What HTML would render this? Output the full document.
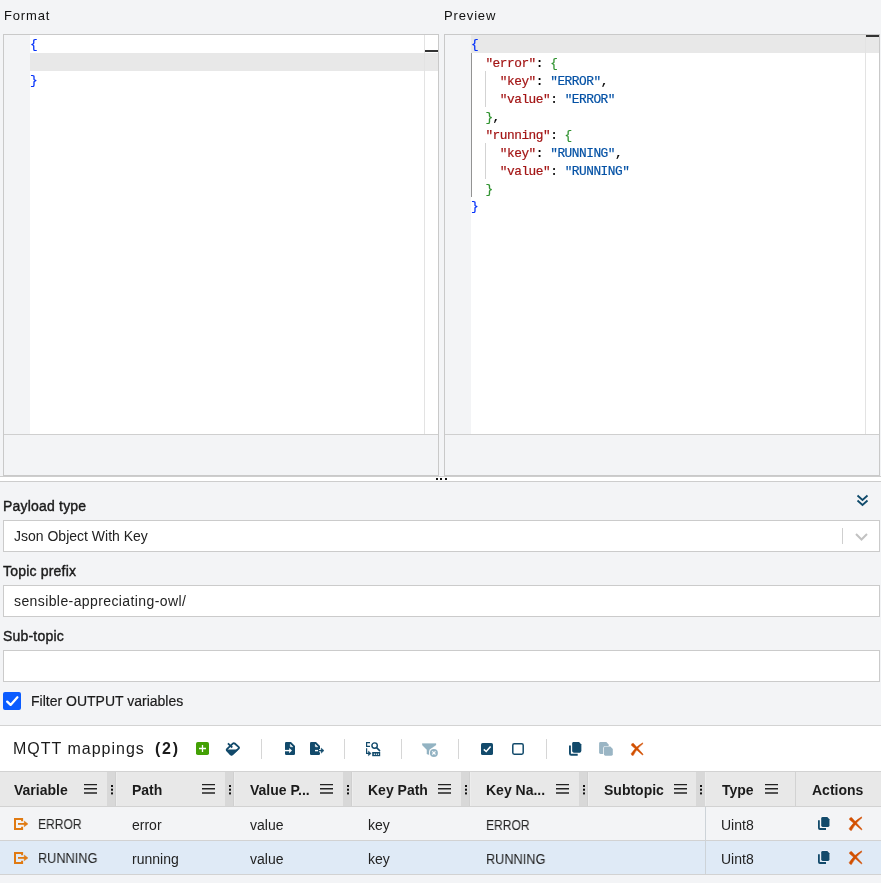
<!DOCTYPE html>
<html><head><meta charset="utf-8">
<style>
*{box-sizing:border-box;margin:0;padding:0}
html,body{width:881px;height:883px;overflow:hidden}
body{position:relative;background:#f3f4f6;font-family:"Liberation Sans",sans-serif;color:#1f1f1f}
.abs{position:absolute}
div{will-change:transform}
.lbl{position:absolute;font-size:13px;letter-spacing:0.85px;line-height:16px;color:#111;white-space:nowrap}
.ed{position:absolute;top:34px;width:436px;height:442px;border:1px solid #c9c9c9;background:#f3f4f6}
.ed .gut{position:absolute;left:0;top:0;width:26px;height:399px;background:#f3f4f6}
.ed .cnt{position:absolute;left:26px;top:0;width:394px;height:399px;background:#fff;overflow:hidden}
.ed .ruler{position:absolute;left:420px;top:0;width:14px;height:399px;background:#fff;border-left:1px solid #e3e3e3}
.ed .hbar{position:absolute;left:0;top:399px;width:434px;height:1px;background:#cfcfcf}
.code{position:absolute;left:0;margin-top:2px;font-family:"Liberation Mono",monospace;font-size:12.8px;letter-spacing:-0.48px;line-height:18px;white-space:pre;height:18px;-webkit-text-stroke-width:0.2px}
.cur{position:absolute;left:0;width:100%;height:18px;background:#e8e8e8}
.b1{color:#0431fa}.b2{color:#319331}.k{color:#a31515}.v{color:#0451a5}.p{color:#000}
.guide{position:absolute;width:1px;background:#d3d3d3}
.form-lbl{position:absolute;left:3px;font-size:14px;line-height:16px;color:#1b1b1b;white-space:nowrap;letter-spacing:0.2px;-webkit-text-stroke:0.4px #1b1b1b}
.inp{position:absolute;left:3px;width:877px;height:32px;background:#fff;border:1px solid #cbcbcb;font-size:14px;line-height:30px;padding-left:10px;color:#222;white-space:nowrap}
.sep{position:absolute;top:739px;width:1px;height:20px;background:#d6d6d6}
.hdr{position:absolute;top:771px;left:0;width:881px;height:36px;background:#e8e8e8;border-top:1px solid #d2d2d2;border-bottom:1px solid #d2d2d2}
.hc{position:absolute;top:10px;font-size:14px;font-weight:bold;line-height:16px;color:#1b1b1b;white-space:nowrap}
.handle{position:absolute;top:0;width:9px;height:34px;background:#d8d8d8;border-right:1px solid #d0d0d0}
.row{position:absolute;left:0;width:881px;height:34px;border-bottom:1px solid #d2d2d2}
.cell{position:absolute;top:9px;font-size:14px;line-height:16px;color:#222;white-space:nowrap}
</style></head><body>

<div class="lbl" style="left:4px;top:8px">Format</div>
<div class="lbl" style="left:444px;top:8px">Preview</div>

<!-- Format editor -->
<div class="ed" style="left:3px">
  <div class="gut"></div>
  <div class="cnt">
    <div class="cur" style="top:18px"></div>
    <div class="code b1" style="top:-1px;left:0">{</div>
    <div class="code b1" style="top:35px;left:0">}</div>
  </div>
  <div class="ruler"><div class="cur" style="top:18px"></div><div class="abs" style="left:0;top:15px;width:13px;height:2px;background:#333"></div></div>
  <div class="hbar"></div>
</div>

<!-- Preview editor -->
<div class="ed" style="left:444px">
  <div class="gut"></div>
  <div class="cnt">
    <div class="cur" style="top:0"></div>
    <div class="guide" style="left:0;top:18px;height:144px;background:#939393"></div>
    <div class="guide" style="left:14px;top:36px;height:36px"></div>
    <div class="guide" style="left:14px;top:108px;height:36px"></div>
    <div class="code" style="top:-1px;left:0"><span class="b1">{</span></div>
    <div class="code" style="top:18px;left:0">  <span class="k">"error"</span><span class="p">: </span><span class="b2">{</span></div>
    <div class="code" style="top:36px;left:0">    <span class="k">"key"</span><span class="p">: </span><span class="v">"ERROR"</span><span class="p">,</span></div>
    <div class="code" style="top:54px;left:0">    <span class="k">"value"</span><span class="p">: </span><span class="v">"ERROR"</span></div>
    <div class="code" style="top:72px;left:0">  <span class="b2">}</span><span class="p">,</span></div>
    <div class="code" style="top:90px;left:0">  <span class="k">"running"</span><span class="p">: </span><span class="b2">{</span></div>
    <div class="code" style="top:108px;left:0">    <span class="k">"key"</span><span class="p">: </span><span class="v">"RUNNING"</span><span class="p">,</span></div>
    <div class="code" style="top:126px;left:0">    <span class="k">"value"</span><span class="p">: </span><span class="v">"RUNNING"</span></div>
    <div class="code" style="top:144px;left:0">  <span class="b2">}</span></div>
    <div class="code" style="top:161px;left:0"><span class="b1">}</span></div>
  </div>
  <div class="ruler"><div class="cur" style="top:0"></div><div class="abs" style="left:0;top:0;width:13px;height:2px;background:#333"></div></div>
  <div class="hbar"></div>
</div>

<!-- splitter -->
<div class="abs" style="left:0;top:476px;width:881px;height:6px;background:#fff;border-top:1px solid #cdcdcd;border-bottom:1px solid #cdcdcd"></div>
<div class="abs" style="left:436px;top:478px;width:2px;height:2px;background:#111"></div>
<div class="abs" style="left:440px;top:478px;width:2px;height:2px;background:#111"></div>
<div class="abs" style="left:445px;top:478px;width:2px;height:2px;background:#111"></div>


<!-- form -->
<div class="form-lbl" style="top:498px">Payload type</div>
<svg class="abs" style="left:856px;top:494px" width="13" height="13" viewBox="0 0 13 13"><path d="M1.5 1.5 L6.5 6 L11.5 1.5 M1.5 6.5 L6.5 11 L11.5 6.5" fill="none" stroke="#0f4a6b" stroke-width="1.8"/></svg>
<div class="inp" style="top:520px">Json Object With Key
  <div class="abs" style="left:838px;top:7px;width:1px;height:16px;background:#cfcfcf"></div>
  <svg class="abs" style="left:851px;top:12px" width="13" height="8" viewBox="0 0 13 8"><path d="M1 1 L6.5 6.5 L12 1" fill="none" stroke="#c2c2c2" stroke-width="2"/></svg>
</div>
<div class="form-lbl" style="top:563px">Topic prefix</div>
<div class="inp" style="top:585px;letter-spacing:0.4px">sensible-appreciating-owl/</div>
<div class="form-lbl" style="top:628px">Sub-topic</div>
<div class="inp" style="top:650px"></div>
<div class="abs" style="left:3px;top:692px;width:18px;height:18px;background:#0b5cff;border-radius:2px">
  <svg class="abs" style="left:0;top:0" width="18" height="18" viewBox="0 0 18 18"><path d="M4.2 9.6 L7.6 12.9 L14.4 5.3" fill="none" stroke="#fff" stroke-width="2.3" stroke-linecap="round" stroke-linejoin="round"/></svg>
</div>
<div class="form-lbl" style="left:31px;top:693px;letter-spacing:0;-webkit-text-stroke:0.2px #1b1b1b">Filter OUTPUT variables</div>

<!-- lower panel -->
<div class="abs" style="left:0;top:725px;width:881px;height:158px;background:#fff;border-top:1px solid #d3d3d3"></div>
<div class="abs" style="left:13px;top:740px;font-size:16px;letter-spacing:1.0px;line-height:18px;color:#1b1b1b;white-space:nowrap">MQTT mappings</div>
<div class="abs" style="left:155px;top:740px;font-size:16px;font-weight:bold;letter-spacing:1.7px;line-height:18px;color:#1b1b1b;white-space:nowrap">(2)</div>

<!-- toolbar -->
<svg class="abs" style="left:196px;top:742px" width="13" height="13" viewBox="0 0 13 13"><rect x="0" y="0" width="13" height="13" rx="1.8" fill="#43a005"/><path d="M3 6.5 H10 M6.5 3 V10" stroke="#fff" stroke-width="1.3"/></svg>
<svg class="abs" style="left:225px;top:741px" width="16" height="16" viewBox="0 0 16 16"><path d="M7.80 2.59 Q8.75 1.7 9.73 2.56 L13.52 5.89 Q14.5 6.75 13.55 7.64 L7.45 13.31 Q6.5 14.2 5.60 13.26 L2.15 9.69 Q1.25 8.75 2.20 7.86 Z" fill="none" stroke="#124a6b" stroke-width="1.9"/><path d="M1.73 9.25 L11.82 9.25 L6.5 13.6 Z" fill="#124a6b" stroke="#124a6b" stroke-width="1.4" stroke-linejoin="round"/><path d="M2.9 2.4 L7.25 6.5" stroke="#124a6b" stroke-width="1.8"/></svg>
<div class="sep" style="left:261px"></div>
<svg class="abs" style="left:285px;top:742px" width="11" height="13" viewBox="0 0 11 13"><path d="M1.2 0 H6 L10 4 V11.8 Q10 13 8.8 13 H1.2 Q0 13 0 11.8 V1.2 Q0 0 1.2 0Z" fill="#124a6b"/><path d="M5.3 2.3 L7.8 4.8 H5.8 Q5.3 4.8 5.3 4.3Z" fill="#fff" stroke="#fff" stroke-width="0.5" stroke-linejoin="round"/><path d="M0 8.6 H5.6" stroke="#fff" stroke-width="1.4"/><path d="M4.2 6 L7 8.6 L4.2 11.2Z" fill="#fff"/></svg>
<svg class="abs" style="left:310px;top:742px" width="15" height="13" viewBox="0 0 15 13"><path d="M1.2 0 H6 L10 4 V11.8 Q10 13 8.8 13 H1.2 Q0 13 0 11.8 V1.2 Q0 0 1.2 0Z" fill="#124a6b"/><path d="M5.3 2.3 L7.8 4.8 H5.8 Q5.3 4.8 5.3 4.3Z" fill="#fff" stroke="#fff" stroke-width="0.5" stroke-linejoin="round"/><path d="M5 8.6 H8.3" stroke="#fff" stroke-width="1.4"/><rect x="9" y="7" width="1.2" height="3.3" fill="#fff"/><path d="M8.3 8.6 H12" stroke="#124a6b" stroke-width="1.4"/><path d="M11.2 6 L14 8.6 L11.2 11.2Z" fill="#124a6b" stroke="#124a6b" stroke-width="0.4" stroke-linejoin="round"/></svg>
<div class="sep" style="left:344px"></div>
<svg class="abs" style="left:366px;top:742px" width="15" height="15" viewBox="0 0 15 15"><path d="M4 0.6 H0.6 V4.4 H4" fill="none" stroke="#124a6b" stroke-width="1.2"/><circle cx="8.6" cy="3.6" r="2.7" fill="none" stroke="#124a6b" stroke-width="1.4"/><path d="M10.6 5.6 L13.6 8.6" stroke="#124a6b" stroke-width="1.5" stroke-linecap="round"/><path d="M0.6 6.2 V11.4 H3" fill="none" stroke="#124a6b" stroke-width="1.2"/><path d="M2.4 9 L5.2 11.4 L2.4 13.8Z" fill="#124a6b" stroke="#124a6b" stroke-width="0.4" stroke-linejoin="round"/><rect x="6.2" y="10" width="8" height="4.2" fill="#124a6b"/><rect x="7.8" y="11.6" width="1.2" height="1.2" fill="#fff"/><rect x="9.8" y="11.6" width="1.2" height="1.2" fill="#fff"/><rect x="11.8" y="11.6" width="1.2" height="1.2" fill="#fff"/></svg>
<div class="sep" style="left:401px"></div>
<svg class="abs" style="left:422px;top:743px" width="17" height="15" viewBox="0 0 17 15"><path d="M0.2 0.6 H14 V1.9 L7.3 6.8 V11.8 L4.9 11 V6.8 L0.2 1.9Z" fill="#93b3c3" stroke="#93b3c3" stroke-width="0.3" stroke-linejoin="round"/><circle cx="11.9" cy="9.9" r="4.9" fill="#fff"/><circle cx="11.9" cy="9.9" r="4" fill="#93b3c3"/><path d="M10.3 8.3 L13.5 11.5 M13.5 8.3 L10.3 11.5" stroke="#fff" stroke-width="1.1"/></svg>
<div class="sep" style="left:458px"></div>
<svg class="abs" style="left:481px;top:743px" width="12" height="12" viewBox="0 0 12 12"><rect x="0" y="0" width="12" height="12" rx="1.6" fill="#124a6b"/><path d="M2.8 6.4 L5.2 8.5 L9.6 3.4" fill="none" stroke="#fff" stroke-width="1.5"/></svg>
<svg class="abs" style="left:512px;top:743px" width="12" height="12" viewBox="0 0 12 12"><rect x="0.8" y="0.8" width="10.4" height="10.4" rx="1.4" fill="none" stroke="#124a6b" stroke-width="1.5"/></svg>
<div class="sep" style="left:546px"></div>
<svg class="abs" style="left:569px;top:742px" width="14" height="14" viewBox="0 0 14 14"><path d="M0.95 3.6 V11.5 Q0.95 12.75 2.2 12.75 H8.7" fill="none" stroke="#124a6b" stroke-width="1.9"/><path d="M4.8 0 H9.799999999999999 L12.2 2.4 V9.1 Q12.2 10.5 10.799999999999999 10.5 H4.8 Q3.4 10.5 3.4 9.1 V1.4 Q3.4 0 4.8 0Z" fill="#124a6b" stroke="#fff" stroke-width="0.9" paint-order="stroke"/><path d="M4.8 0 H9.799999999999999 L12.2 2.4 V9.1 Q12.2 10.5 10.799999999999999 10.5 H4.8 Q3.4 10.5 3.4 9.1 V1.4 Q3.4 0 4.8 0Z" fill="#124a6b"/></svg>
<svg class="abs" style="left:599px;top:742px" width="15" height="15" viewBox="0 0 15 15"><path d="M1.5 0.1 H7.299999999999999 L9.7 2.5 V10.6 Q9.7 12 8.299999999999999 12 H1.5 Q0.1 12 0.1 10.6 V1.5 Q0.1 0.1 1.5 0.1Z" fill="#9ab5c4"/><path d="M6.4 4.6 H11.4 L13.8 7.0 V12.299999999999999 Q13.8 13.7 12.4 13.7 H6.4 Q5 13.7 5 12.299999999999999 V6.0 Q5 4.6 6.4 4.6Z" fill="#9ab5c4" stroke="#fff" stroke-width="1.4" paint-order="stroke"/></svg>
<svg class="abs" style="left:630px;top:741.5px" width="14" height="14" viewBox="0 0 15 15"><path d="M1.45 3.57 Q1.2 1.6 3.55 1.43 L14.05 13.14 Q13.9 13.9 13.35 13.86 Z" fill="#d25000" stroke="#d25000" stroke-width="0.5" stroke-linejoin="round"/><path d="M13.33 0.96 L14.07 1.64 Q7.6 6.2 3.4 14.52 Q1.6 14.6 1.2 12.48 Q6.5 4.6 13.33 0.96 Z" fill="#d25000" stroke="#d25000" stroke-width="0.5" stroke-linejoin="round"/></svg>

<!-- table -->
<div class="hdr">
  <div class="hc" style="left:14px">Variable</div>
  <div class="hc" style="left:132px">Path</div>
  <div class="hc" style="left:250px">Value P...</div>
  <div class="hc" style="left:368px">Key Path</div>
  <div class="hc" style="left:486px">Key Na...</div>
  <div class="hc" style="left:604px">Subtopic</div>
  <div class="hc" style="left:722px">Type</div>
  <div class="hc" style="left:812px">Actions</div>
  <div class="handle" style="left:107px"><svg class="abs" style="left:4px;top:13px" width="2" height="10" viewBox="0 0 2 10"><rect x="0" y="0" width="2" height="2" fill="#111"/><rect x="0" y="3.7" width="2" height="2" fill="#111"/><rect x="0" y="7.4" width="2" height="2" fill="#111"/></svg></div><div class="abs" style="left:116px;top:0;width:1px;height:34px;background:#ededed"></div><div class="handle" style="left:225px"><svg class="abs" style="left:4px;top:13px" width="2" height="10" viewBox="0 0 2 10"><rect x="0" y="0" width="2" height="2" fill="#111"/><rect x="0" y="3.7" width="2" height="2" fill="#111"/><rect x="0" y="7.4" width="2" height="2" fill="#111"/></svg></div><div class="abs" style="left:234px;top:0;width:1px;height:34px;background:#ededed"></div><div class="handle" style="left:343px"><svg class="abs" style="left:4px;top:13px" width="2" height="10" viewBox="0 0 2 10"><rect x="0" y="0" width="2" height="2" fill="#111"/><rect x="0" y="3.7" width="2" height="2" fill="#111"/><rect x="0" y="7.4" width="2" height="2" fill="#111"/></svg></div><div class="abs" style="left:352px;top:0;width:1px;height:34px;background:#ededed"></div><div class="handle" style="left:461px"><svg class="abs" style="left:4px;top:13px" width="2" height="10" viewBox="0 0 2 10"><rect x="0" y="0" width="2" height="2" fill="#111"/><rect x="0" y="3.7" width="2" height="2" fill="#111"/><rect x="0" y="7.4" width="2" height="2" fill="#111"/></svg></div><div class="abs" style="left:470px;top:0;width:1px;height:34px;background:#ededed"></div><div class="handle" style="left:579px"><svg class="abs" style="left:4px;top:13px" width="2" height="10" viewBox="0 0 2 10"><rect x="0" y="0" width="2" height="2" fill="#111"/><rect x="0" y="3.7" width="2" height="2" fill="#111"/><rect x="0" y="7.4" width="2" height="2" fill="#111"/></svg></div><div class="abs" style="left:588px;top:0;width:1px;height:34px;background:#ededed"></div><div class="handle" style="left:696px;width:10px"><svg class="abs" style="left:4px;top:13px" width="2" height="10" viewBox="0 0 2 10"><rect x="0" y="0" width="2" height="2" fill="#111"/><rect x="0" y="3.7" width="2" height="2" fill="#111"/><rect x="0" y="7.4" width="2" height="2" fill="#111"/></svg></div><div class="abs" style="left:705px;top:0;width:1px;height:34px;background:#ededed"></div>
  <svg class="abs" style="left:84px;top:11px" width="14" height="11" viewBox="0 0 14 11"><path d="M0 1.6 H13 M0 5.8 H13 M0 10 H13" stroke="#222" stroke-width="1.4"/></svg><svg class="abs" style="left:202px;top:11px" width="14" height="11" viewBox="0 0 14 11"><path d="M0 1.6 H13 M0 5.8 H13 M0 10 H13" stroke="#222" stroke-width="1.4"/></svg><svg class="abs" style="left:320px;top:11px" width="14" height="11" viewBox="0 0 14 11"><path d="M0 1.6 H13 M0 5.8 H13 M0 10 H13" stroke="#222" stroke-width="1.4"/></svg><svg class="abs" style="left:438px;top:11px" width="14" height="11" viewBox="0 0 14 11"><path d="M0 1.6 H13 M0 5.8 H13 M0 10 H13" stroke="#222" stroke-width="1.4"/></svg><svg class="abs" style="left:556px;top:11px" width="14" height="11" viewBox="0 0 14 11"><path d="M0 1.6 H13 M0 5.8 H13 M0 10 H13" stroke="#222" stroke-width="1.4"/></svg><svg class="abs" style="left:674px;top:11px" width="14" height="11" viewBox="0 0 14 11"><path d="M0 1.6 H13 M0 5.8 H13 M0 10 H13" stroke="#222" stroke-width="1.4"/></svg><svg class="abs" style="left:765px;top:11px" width="14" height="11" viewBox="0 0 14 11"><path d="M0 1.6 H13 M0 5.8 H13 M0 10 H13" stroke="#222" stroke-width="1.4"/></svg>
  <div class="abs" style="left:795px;top:0;width:1px;height:34px;background:#d2d2d2"></div>
</div>
<div class="row" style="top:806px;background:#f3f4f6;border-top:1px solid #d2d2d2;height:35px"></div>
<div class="abs" style="left:0;top:875px;width:881px;height:8px;background:#f3f4f6"></div>
<div class="row" style="top:841px;background:#dfeaf6;height:34px"></div>
<div class="abs" style="left:705px;top:807px;width:1px;height:67px;background:#cdd3d8"></div>
<svg class="abs" style="left:14px;top:818px" width="15" height="13" viewBox="0 0 15 13"><path d="M8.1 3.2 V1 H1 V11 H8.1 V8.8" fill="none" stroke="#e07a12" stroke-width="2"/><path d="M4 5.9 H10.8" stroke="#e07a12" stroke-width="1.8"/><path d="M10.2 3 L14 5.9 L10.2 8.8Z" fill="#e07a12" stroke="#e07a12" stroke-width="0.4" stroke-linejoin="round"/></svg><div class="cell" style="left:38px;top:816px;transform:scaleX(0.862);transform-origin:0 0">ERROR</div><div class="cell" style="left:132px;top:817px">error</div><div class="cell" style="left:250px;top:817px">value</div><div class="cell" style="left:368px;top:817px">key</div><div class="cell" style="left:486px;top:817px;transform:scaleX(0.862);transform-origin:0 0">ERROR</div><div class="cell" style="left:721px;top:817px">Uint8</div><svg class="abs" style="left:817px;top:816px" width="14" height="14" viewBox="0 0 14 14"><path d="M1.9 4.2 V12 Q1.9 13 2.9 13 H9" fill="none" stroke="#124a6b" stroke-width="1.8"/><path d="M5.6 1.1 H10.3 L12.5 3.3000000000000003 V9.5 Q12.5 10.9 11.1 10.9 H5.6 Q4.2 10.9 4.2 9.5 V2.5 Q4.2 1.1 5.6 1.1Z" fill="#124a6b" stroke="#fff" stroke-width="1" paint-order="stroke"/></svg><svg class="abs" style="left:848px;top:816px" width="15" height="15" viewBox="0 0 15 15"><path d="M1.45 3.57 Q1.2 1.6 3.55 1.43 L14.05 13.14 Q13.9 13.9 13.35 13.86 Z" fill="#d25000" stroke="#d25000" stroke-width="0.5" stroke-linejoin="round"/><path d="M13.33 0.96 L14.07 1.64 Q7.6 6.2 3.4 14.52 Q1.6 14.6 1.2 12.48 Q6.5 4.6 13.33 0.96 Z" fill="#d25000" stroke="#d25000" stroke-width="0.5" stroke-linejoin="round"/></svg><svg class="abs" style="left:14px;top:852px" width="15" height="13" viewBox="0 0 15 13"><path d="M8.1 3.2 V1 H1 V11 H8.1 V8.8" fill="none" stroke="#e07a12" stroke-width="2"/><path d="M4 5.9 H10.8" stroke="#e07a12" stroke-width="1.8"/><path d="M10.2 3 L14 5.9 L10.2 8.8Z" fill="#e07a12" stroke="#e07a12" stroke-width="0.4" stroke-linejoin="round"/></svg><div class="cell" style="left:38px;top:850px;transform:scaleX(0.91);transform-origin:0 0">RUNNING</div><div class="cell" style="left:132px;top:851px">running</div><div class="cell" style="left:250px;top:851px">value</div><div class="cell" style="left:368px;top:851px">key</div><div class="cell" style="left:486px;top:851px;transform:scaleX(0.91);transform-origin:0 0">RUNNING</div><div class="cell" style="left:721px;top:851px">Uint8</div><svg class="abs" style="left:817px;top:850px" width="14" height="14" viewBox="0 0 14 14"><path d="M1.9 4.2 V12 Q1.9 13 2.9 13 H9" fill="none" stroke="#124a6b" stroke-width="1.8"/><path d="M5.6 1.1 H10.3 L12.5 3.3000000000000003 V9.5 Q12.5 10.9 11.1 10.9 H5.6 Q4.2 10.9 4.2 9.5 V2.5 Q4.2 1.1 5.6 1.1Z" fill="#124a6b" stroke="#fff" stroke-width="1" paint-order="stroke"/></svg><svg class="abs" style="left:848px;top:850px" width="15" height="15" viewBox="0 0 15 15"><path d="M1.45 3.57 Q1.2 1.6 3.55 1.43 L14.05 13.14 Q13.9 13.9 13.35 13.86 Z" fill="#d25000" stroke="#d25000" stroke-width="0.5" stroke-linejoin="round"/><path d="M13.33 0.96 L14.07 1.64 Q7.6 6.2 3.4 14.52 Q1.6 14.6 1.2 12.48 Q6.5 4.6 13.33 0.96 Z" fill="#d25000" stroke="#d25000" stroke-width="0.5" stroke-linejoin="round"/></svg>
</body></html>
